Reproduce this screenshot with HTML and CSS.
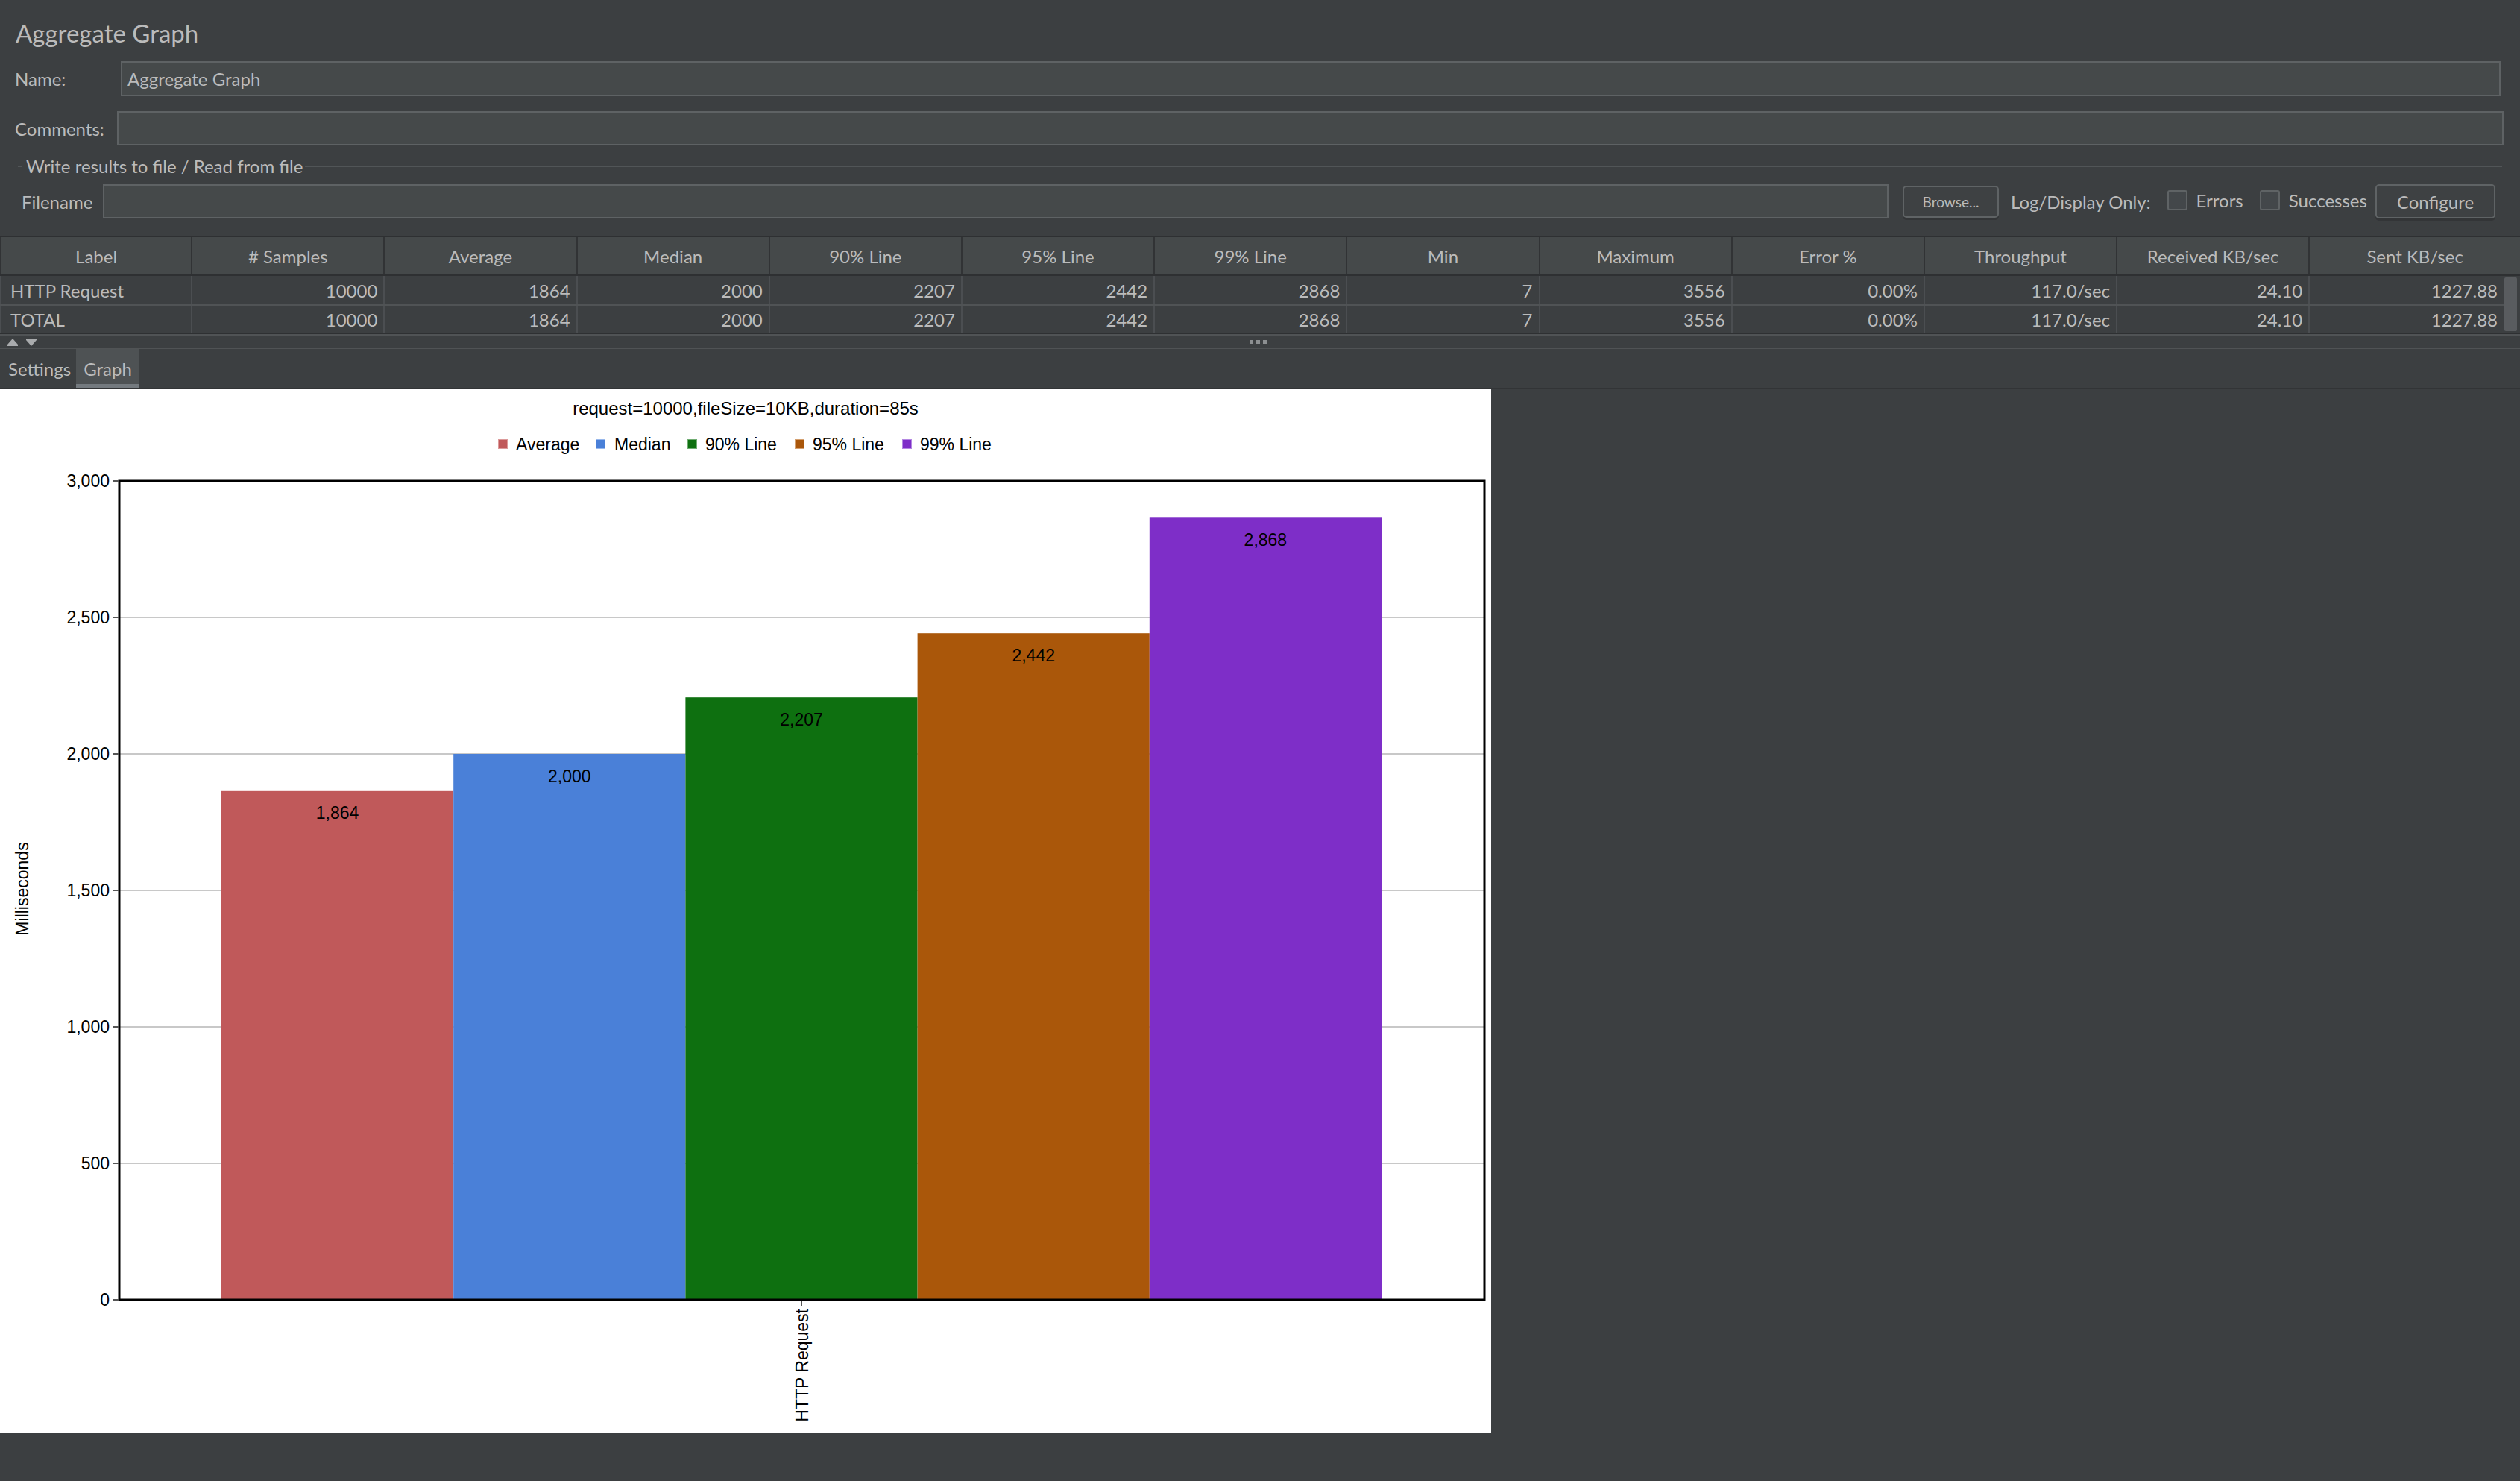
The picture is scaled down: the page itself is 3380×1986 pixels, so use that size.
FILE: index.html
```html
<!DOCTYPE html>
<html>
<head>
<meta charset="utf-8">
<link rel="stylesheet" href="styles.css">
</head>
<body>
<div class="app">
  <div class="title">Aggregate Graph</div>

  <div class="field-row name-row">
    <div class="lbl name-lbl">Name:</div>
    <div class="input">Aggregate Graph</div>
  </div>

  <div class="field-row comments-row">
    <div class="lbl comments-lbl">Comments:</div>
    <div class="input"></div>
  </div>

  <fieldset class="group">
    <legend>Write results to file / Read from file</legend>
    <div class="field-row file-row">
      <div class="lbl file-lbl">Filename</div>
      <div class="input file-input"></div>
      <div class="btn browse">Browse...</div>
      <div class="txt logonly">Log/Display Only:</div>
      <div class="check"></div>
      <div class="txt check-lbl">Errors</div>
      <div class="check"></div>
      <div class="txt check-lbl">Successes</div>
      <div class="btn configure">Configure</div>
    </div>
  </fieldset>

  <div class="table">
    <div class="thead">
      <div class="th">Label</div>
      <div class="th"># Samples</div>
      <div class="th">Average</div>
      <div class="th">Median</div>
      <div class="th">90% Line</div>
      <div class="th">95% Line</div>
      <div class="th">99% Line</div>
      <div class="th">Min</div>
      <div class="th">Maximum</div>
      <div class="th">Error %</div>
      <div class="th">Throughput</div>
      <div class="th">Received KB/sec</div>
      <div class="th last">Sent KB/sec</div>
    </div>
    <div class="tbody">
      <div class="rows">
        <div class="tr r1">
          <div class="td first">HTTP Request</div>
          <div class="td">10000</div>
          <div class="td">1864</div>
          <div class="td">2000</div>
          <div class="td">2207</div>
          <div class="td">2442</div>
          <div class="td">2868</div>
          <div class="td">7</div>
          <div class="td">3556</div>
          <div class="td">0.00%</div>
          <div class="td">117.0/sec</div>
          <div class="td">24.10</div>
          <div class="td last">1227.88</div>
        </div>
        <div class="tr r2">
          <div class="td first">TOTAL</div>
          <div class="td">10000</div>
          <div class="td">1864</div>
          <div class="td">2000</div>
          <div class="td">2207</div>
          <div class="td">2442</div>
          <div class="td">2868</div>
          <div class="td">7</div>
          <div class="td">3556</div>
          <div class="td">0.00%</div>
          <div class="td">117.0/sec</div>
          <div class="td">24.10</div>
          <div class="td last">1227.88</div>
        </div>
      </div>
      <div class="vscroll"><div class="thumb"></div></div>
    </div>
  </div>

  <div class="splitter">
    <svg class="arrows" width="50" height="16" viewBox="0 0 50 16">
      <polygon points="10,12 17,4 24,12" fill="#a9abad"/>
      <rect x="10" y="12" width="14" height="2" fill="#a9abad"/>
      <rect x="35" y="4" width="14" height="2" fill="#a9abad"/>
      <polygon points="35,6 42,14 49,6" fill="#a9abad"/>
    </svg>
    <div class="dots"><span></span><span></span><span></span></div>
  </div>

  <div class="tabs">
    <div class="tab">Settings</div>
    <div class="tab active">Graph</div>
  </div>

  <div class="chart-area">
    <div class="chart">
      <svg width="2000" height="1400" viewBox="0 0 2000 1400" class="chart-svg">
        <text x="1000" y="34" text-anchor="middle" class="ct-title">request=10000,fileSize=10KB,duration=85s</text>

        <g class="legend">
          <rect x="668.5" y="67.5" width="12" height="12" fill="#c0595a" stroke="#dc9a9a"/>
          <text x="692" y="82">Average</text>
          <rect x="799.5" y="67.5" width="12" height="12" fill="#4a80d8" stroke="#98b8ec"/>
          <text x="824" y="82">Median</text>
          <rect x="922.5" y="67.5" width="12" height="12" fill="#0e7010" stroke="#70ad72"/>
          <text x="946" y="82">90% Line</text>
          <rect x="1066.5" y="67.5" width="12" height="12" fill="#aa570a" stroke="#d4a070"/>
          <text x="1090" y="82">95% Line</text>
          <rect x="1210.5" y="67.5" width="12" height="12" fill="#7e2ec8" stroke="#b488e2"/>
          <text x="1234" y="82">99% Line</text>
        </g>

        <g class="grid" stroke="#c8c8c8" stroke-width="2">
          <line x1="161" y1="306" x2="1990" y2="306"/>
          <line x1="161" y1="489" x2="1990" y2="489"/>
          <line x1="161" y1="672" x2="1990" y2="672"/>
          <line x1="161" y1="855" x2="1990" y2="855"/>
          <line x1="161" y1="1038" x2="1990" y2="1038"/>
        </g>

        <g class="bars">
          <rect x="297" y="538.8" width="311.2" height="682.2" fill="#c0595a"/>
          <rect x="608.2" y="489" width="311.2" height="732" fill="#4a80d8"/>
          <rect x="919.4" y="413.2" width="311.2" height="807.8" fill="#0e7010"/>
          <rect x="1230.6" y="327.2" width="311.2" height="893.8" fill="#aa570a"/>
          <rect x="1541.8" y="171.3" width="311.2" height="1049.7" fill="#7e2ec8"/>
        </g>

        <g class="vals" text-anchor="middle">
          <text x="452.6" y="576">1,864</text>
          <text x="763.8" y="527">2,000</text>
          <text x="1075" y="451">2,207</text>
          <text x="1386.2" y="365">2,442</text>
          <text x="1697.4" y="210">2,868</text>
        </g>

        <rect x="160" y="123" width="1831" height="1098" fill="none" stroke="#000" stroke-width="3"/>

        <g class="ticks" stroke="#555" stroke-width="2">
          <line x1="152" y1="123" x2="159" y2="123"/>
          <line x1="152" y1="306" x2="159" y2="306"/>
          <line x1="152" y1="489" x2="159" y2="489"/>
          <line x1="152" y1="672" x2="159" y2="672"/>
          <line x1="152" y1="855" x2="159" y2="855"/>
          <line x1="152" y1="1038" x2="159" y2="1038"/>
          <line x1="152" y1="1221" x2="159" y2="1221"/>
          <line x1="1075" y1="1222" x2="1075" y2="1229"/>
        </g>

        <g class="ylabels" text-anchor="end">
          <text x="147" y="131">3,000</text>
          <text x="147" y="314">2,500</text>
          <text x="147" y="497">2,000</text>
          <text x="147" y="680">1,500</text>
          <text x="147" y="863">1,000</text>
          <text x="147" y="1046">500</text>
          <text x="147" y="1229">0</text>
        </g>

        <text class="axis-t" transform="translate(38,670) rotate(-90)" text-anchor="middle">Milliseconds</text>
        <text class="axis-t" transform="translate(1084,1233) rotate(-90)" text-anchor="end">HTTP Request</text>
      </svg>
    </div>
  </div>
</div>
</body>
</html>
```

FILE: styles.css
```css
html, body {
  margin: 0;
  padding: 0;
}
body {
  background: #3c3f41;
  color: #bbbbbb;
  font-family: Lato, "Open Sans", "Noto Sans", sans-serif;
  font-size: 24px;
  width: 3380px;
  height: 1986px;
  overflow: hidden;
}
.app {
  display: flex;
  flex-direction: column;
  width: 3380px;
}
.title {
  margin-top: 24px;
  margin-left: 21px;
  height: 40px;
  line-height: 40px;
  font-size: 33px;
  white-space: nowrap;
}
.field-row {
  display: flex;
  align-items: center;
}
.lbl {
  flex: none;
  white-space: nowrap;
}
.input {
  flex: 1;
  box-sizing: border-box;
  height: 100%;
  background: #45494a;
  border: 2px solid #5e6264;
  display: flex;
  align-items: center;
  padding-left: 7px;
  white-space: nowrap;
}
.name-row {
  margin-top: 18px;
  height: 47px;
  padding-left: 20px;
  padding-right: 26px;
}
.name-lbl { width: 142px; }
.comments-row {
  margin-top: 20px;
  height: 46px;
  padding-left: 20px;
  padding-right: 22px;
}
.comments-lbl { width: 137px; }

.group {
  margin: 13px 24px 0 24px;
  padding: 9px 9px 23px 5px;
  border: 0;
  border-top: 2px solid #515557;
  min-width: 0;
}
.group legend {
  margin-left: 1px;
  padding: 0 3px 0 5px;
  line-height: 30px;
  height: 30px;
}
.file-row {
  height: 46px;
}
.file-lbl { width: 109px; }
.file-input {
  flex: none;
  width: 2395px;
}
.btn {
  flex: none;
  box-sizing: border-box;
  border: 2px solid #5f6365;
  border-radius: 5px;
  background: #3e4143;
  box-shadow: 0 3px 0 #333537;
  display: flex;
  align-items: center;
  justify-content: center;
}
.browse {
  margin-left: 19px;
  width: 129px;
  height: 43px;
  font-size: 19px;
}
.txt {
  flex: none;
  white-space: nowrap;
}
.logonly { margin-left: 16px; }
.check {
  flex: none;
  box-sizing: border-box;
  width: 27px;
  height: 27px;
  border: 2px solid #5f6365;
  border-radius: 3px;
  background: #43474a;
  margin-left: 22px;
  margin-top: -4px;
}
.check-lbl { margin-left: 12px; margin-top: -4px; }
.configure {
  margin-left: auto;
  width: 161px;
  height: 46px;
  font-size: 24px;
}

.table {
  display: flex;
  flex-direction: column;
}
.thead {
  display: grid;
  grid-template-columns: repeat(12, 258.2px) 1fr;
  height: 49px;
  background: #45494a;
  border-top: 2px solid #2e3032;
  border-bottom: 3px solid #2e3032;
}
.th {
  display: flex;
  align-items: center;
  justify-content: center;
  border-right: 2px solid #313335;
  white-space: nowrap;
  padding-top: 2px;
}
.th:first-child { border-left: 2px solid #313335; }
.th.last { border-right: 0; }
.tbody {
  display: flex;
  border-bottom: 2px solid #2e3032;
}
.rows {
  width: 3358px;
}
.tr {
  display: grid;
  grid-template-columns: repeat(12, 258.2px) 1fr;
}
.tr.r1 {
  height: 38px;
  border-bottom: 2px solid #505355;
}
.tr.r2 {
  height: 36px;
}
.td {
  display: flex;
  align-items: center;
  justify-content: flex-end;
  padding: 0 8px 0 0;
  border-right: 2px solid #4b4e51;
  white-space: nowrap;
}
.td.first {
  justify-content: flex-start;
  padding-left: 12px;
  border-left: 2px solid #4b4e51;
}
.td.last { border-right: 0; }
.vscroll {
  flex: 1;
  padding: 2px 4px 2px 1px;
  display: flex;
}
.thumb {
  flex: 1;
  background: #595c5f;
  border-radius: 2px;
}

.splitter {
  height: 16px;
  border-top: 2px solid #505355;
  border-bottom: 2px solid #505355;
  display: flex;
  align-items: center;
  position: relative;
}
.arrows {
  display: block;
}
.dots {
  position: absolute;
  left: 1676px;
  top: 6px;
  display: flex;
  gap: 4px;
}
.dots span {
  width: 5px;
  height: 5px;
  background: #8c8f91;
}

.tabs {
  display: flex;
  height: 52px;
  border-bottom: 2px solid #323436;
}
.tab {
  display: flex;
  align-items: center;
  padding: 0 7px 0 11px;
  box-sizing: border-box;
}
.tab.active {
  background: #4e5254;
  padding: 0 9px 0 10px;
  border-bottom: 5px solid #747a7f;
  padding-top: 5px;
}

.chart-area {
  display: flex;
  height: 1400px;
}
.chart {
  width: 2000px;
  background: #ffffff;
}
.chart-svg {
  display: block;
  font-family: "Liberation Sans", Arial, sans-serif;
  font-size: 23px;
  fill: #000;
}
.ct-title { font-size: 24px; }
```
